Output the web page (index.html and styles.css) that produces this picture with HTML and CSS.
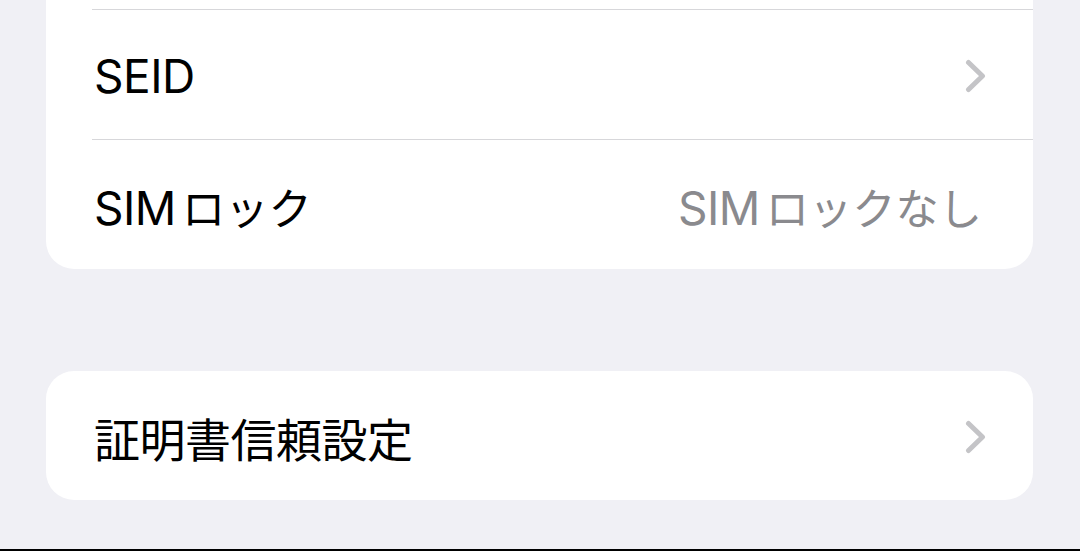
FILE: index.html
```html
<!DOCTYPE html>
<html lang="ja">
<head>
  <meta charset="UTF-8" />
  <title>情報</title>
  <link rel="stylesheet" href="styles.css">
</head>
<body>

  <div class="screen">
    <div class="group group-cont">
      <div class="row">
        <span class="label">SEID</span>
        <svg class="chevron" width="21" height="34" viewBox="0 0 21 34"><polyline points="3.5,3.5 17.5,17 3.5,30.5" /></svg>
      </div>
      <div class="row">
        <span class="label">SIM<span class="kana">ロック</span></span>
        <span class="value">SIM<span class="kana">ロックなし</span></span>
      </div>
    </div>

    <div class="group">
      <div class="row">
        <span class="label">証明書信頼設定</span>
        <svg class="chevron" width="21" height="34" viewBox="0 0 21 34"><polyline points="3.5,3.5 17.5,17 3.5,30.5" /></svg>
      </div>
    </div>
  </div>

  <div class="edge"></div>

</body>
</html>
```

FILE: styles.css
```css
html, body {
  margin: 0;
  height: 100%;
}
body {
  background-color: #f0f0f5;
  color: #000;
  font-family: Inter, "Liberation Sans", "Noto Sans CJK JP", sans-serif;
  display: flex;
  flex-direction: column;
  overflow: hidden;
}
.screen {
  flex: 1;
  padding: 0 47px 0 46px;
}
.group {
  background-color: #fff;
  border-radius: 28px;
  margin-top: 102px;
}
/* list continues from above the fold */
.group-cont {
  margin-top: 0;
  padding-top: 10px;
  border-top-left-radius: 0;
  border-top-right-radius: 0;
}
.row {
  height: 129px;
  display: flex;
  align-items: center;
  justify-content: space-between;
  padding: 2px 47px 0 48px;
  box-sizing: border-box;
  position: relative;
}
.row + .row::before,
.group-cont .row:first-child::before {
  content: "";
  position: absolute;
  left: 46px;
  right: 0;
  top: -1px;
  height: 1px;
  background-color: #d7d7da;
}
.group-cont .row:first-child {
  height: 130px;
}
.label {
  font-size: 46px;
  letter-spacing: -0.5px;
}
.value {
  font-size: 46px;
  letter-spacing: -0.5px;
  color: #8a8a8e;
  margin-right: 4px;
}
.kana {
  font-size: 0.94em;
  margin-left: 6px;
  letter-spacing: 0;
}
.chevron {
  fill: none;
  stroke: #c4c4c7;
  stroke-width: 5;
  stroke-linecap: round;
  stroke-linejoin: round;
}
.edge {
  height: 2px;
  background-color: #000;
}
```
